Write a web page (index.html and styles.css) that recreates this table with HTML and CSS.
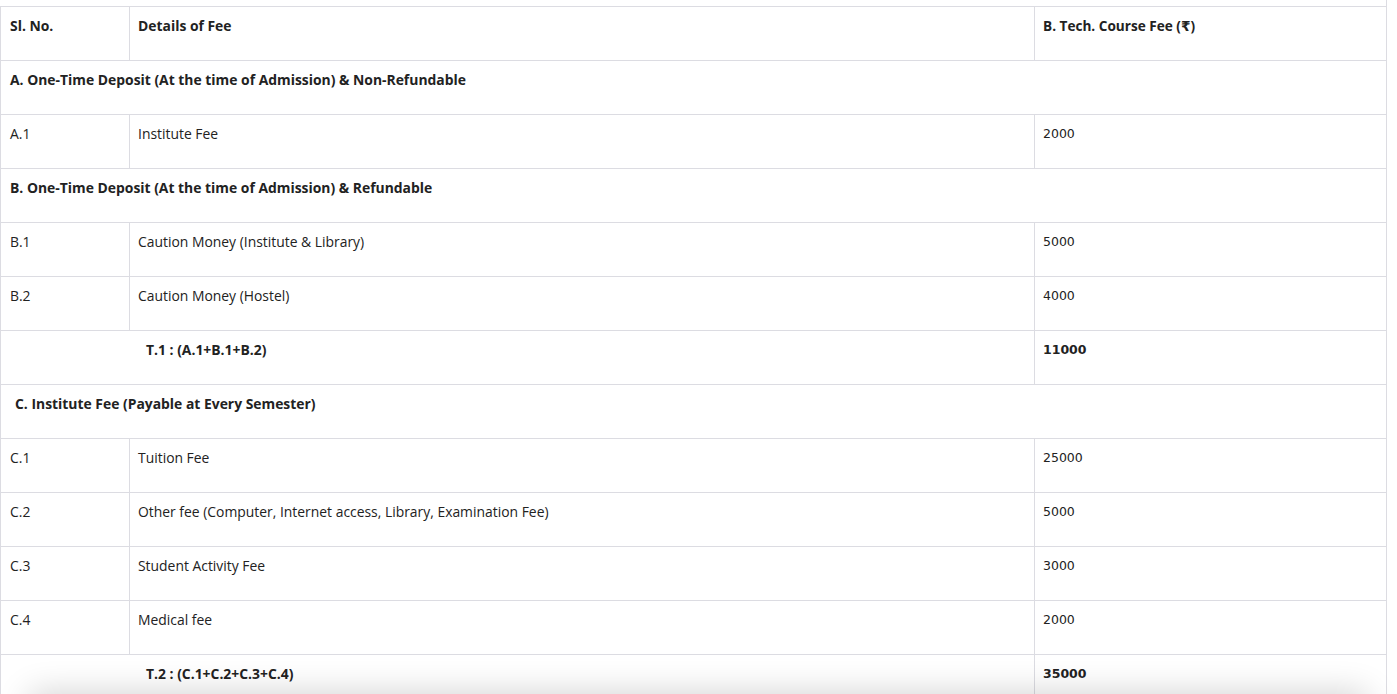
FILE: index.html
```html
<!DOCTYPE html>
<html lang="en">
  <head>
    <meta charset="UTF-8" />
    <meta name="viewport" content="width=device-width, initial-scale=1.0" />
    <title>Fee Structure</title>
    <link rel="stylesheet" href="styles.css">
  </head>
  <body>
    <div class="fee-wrap">
      <table class="fee-table">
        <colgroup>
          <col class="col-sl" />
          <col class="col-details" />
          <col class="col-amount" />
        </colgroup>
        <tr class="head">
          <td>Sl. No.</td>
          <td>Details of Fee</td>
          <td>B. Tech. Course Fee (₹)</td>
        </tr>
        <tr class="section">
          <td colspan="3">A. One-Time Deposit (At the time of Admission) &amp; Non-Refundable</td>
        </tr>
        <tr>
          <td>A.1</td>
          <td>Institute Fee</td>
          <td class="amount">2000</td>
        </tr>
        <tr class="section">
          <td colspan="3">B. One-Time Deposit (At the time of Admission) &amp; Refundable</td>
        </tr>
        <tr>
          <td>B.1</td>
          <td>Caution Money (Institute &amp; Library)</td>
          <td class="amount">5000</td>
        </tr>
        <tr>
          <td>B.2</td>
          <td>Caution Money (Hostel)</td>
          <td class="amount">4000</td>
        </tr>
        <tr class="total">
          <td colspan="2">T.1 : (A.1+B.1+B.2)</td>
          <td class="amount">11000</td>
        </tr>
        <tr class="section">
          <td colspan="3" class="indent">C. Institute Fee (Payable at Every Semester)</td>
        </tr>
        <tr>
          <td>C.1</td>
          <td>Tuition Fee</td>
          <td class="amount">25000</td>
        </tr>
        <tr>
          <td>C.2</td>
          <td>Other fee (Computer, Internet access, Library, Examination Fee)</td>
          <td class="amount">5000</td>
        </tr>
        <tr>
          <td>C.3</td>
          <td>Student Activity Fee</td>
          <td class="amount">3000</td>
        </tr>
        <tr>
          <td>C.4</td>
          <td>Medical fee</td>
          <td class="amount">2000</td>
        </tr>
        <tr class="total">
          <td colspan="2">T.2 : (C.1+C.2+C.3+C.4)</td>
          <td class="amount">35000</td>
        </tr>
      </table>
    </div>
    <!-- shadow of the bar below the fold -->
    <div class="bottom-bar"></div>
  </body>
</html>
```

FILE: styles.css
```css
* {
  margin: 0;
  padding: 0;
  box-sizing: border-box;
}

body {
  font-family: "Open Sans", "DejaVu Sans", sans-serif;
  font-size: 13.9px;
  color: #222;
  background: #fff;
  overflow: hidden;
}

.fee-wrap {
  width: 1387px;
  padding-top: 6px;
  border-right: 1px solid #dcdce2;
}

.fee-table {
  width: 1386px;
  border-collapse: collapse;
  table-layout: fixed;
}

.col-sl {
  width: 129px;
}

.col-details {
  width: 905px;
}

.fee-table td {
  border: 1px solid #dcdce2;
  padding: 9px 8px 24px;
  line-height: 20px;
  vertical-align: top;
  white-space: nowrap;
}

.fee-table tr td:first-child {
  padding-left: 9px;
}

.fee-table tr td:last-child {
  border-right: none;
}

.head td,
.section td,
.total td {
  font-weight: 700;
}

.fee-table .section td.indent {
  padding-left: 14px;
}

.fee-table .total td:first-child {
  padding-left: 145px;
}

.amount {
  font-family: "DejaVu Sans", Verdana, sans-serif;
  font-size: 12.5px;
}

.head .amount,
.head td:last-child {
  font-family: "Open Sans", "DejaVu Sans", sans-serif;
  font-size: 13.6px;
}

.bottom-bar {
  position: fixed;
  left: 30px;
  right: 30px;
  bottom: -30px;
  height: 30px;
  background: #fff;
  box-shadow: 0 0 34px rgba(0, 0, 0, 0.2);
}
```
